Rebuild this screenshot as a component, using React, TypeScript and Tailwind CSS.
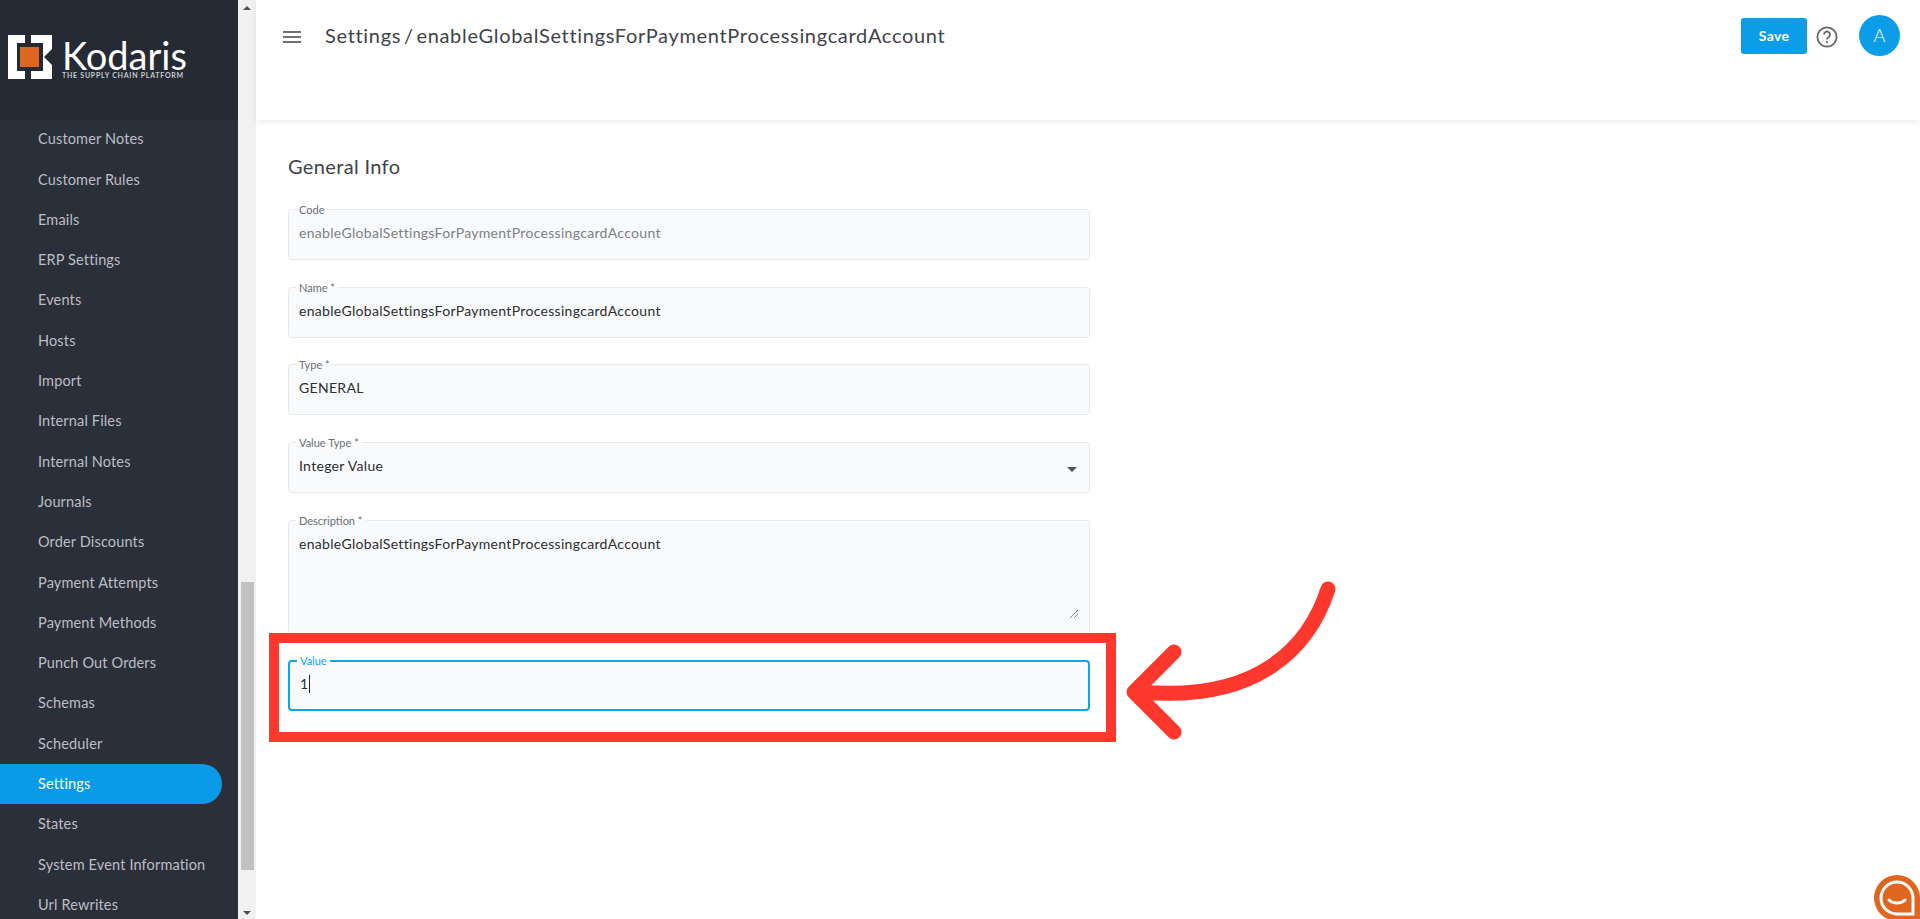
const navItems = [
  'Customer Notes',
  'Customer Rules',
  'Emails',
  'ERP Settings',
  'Events',
  'Hosts',
  'Import',
  'Internal Files',
  'Internal Notes',
  'Journals',
  'Order Discounts',
  'Payment Attempts',
  'Payment Methods',
  'Punch Out Orders',
  'Schemas',
  'Scheduler',
  'Settings',
  'States',
  'System Event Information',
  'Url Rewrites',
];

const settingCode = 'enableGlobalSettingsForPaymentProcessingcardAccount';

function Logo() {
  return (
    <div className="flex items-center pl-2 pt-[35px]">
      <svg width="44" height="44" viewBox="0 0 44 44" className="shrink-0">
        <path d="M0 0H17V8H9V36H17V44H0Z" fill="#fff" />
        <path d="M23 0H44V14L36 22H35V8H23Z" fill="#fff" />
        <path d="M23 44H44V30L36 22H35V36H23Z" fill="#fff" />
        <rect x="12" y="12" width="19" height="20" fill="#e0651f" />
      </svg>
      <div className="ml-[10px] mt-[4px] flex flex-col font-['Lato',sans-serif] text-white">
        <span className="text-[38px] leading-[30px]">Kodaris</span>
        <span className="mt-[2px] text-[7px] font-bold leading-[7px] tracking-[0.75px] text-[#c9cbce]">THE SUPPLY CHAIN PLATFORM</span>
      </div>
    </div>
  );
}

function Sidebar() {
  return (
    <aside className="flex h-full w-[238px] shrink-0 flex-col bg-[#2b2f3a]">
      <div className="h-[120px] shrink-0 bg-[#252a35]">
        <Logo />
      </div>
      <nav className="-mt-[1px] flex-1 overflow-hidden">
        {navItems.map((item) => (
          <div
            key={item}
            className={`flex h-[40.3px] w-[222px] items-center rounded-r-full pl-[38px] text-[14.5px] tracking-[0.15px] ${
              item === 'Settings' ? 'bg-[#0a9be8] text-white' : 'text-[#bcbec3]'
            }`}
          >
            {item}
          </div>
        ))}
      </nav>
    </aside>
  );
}

function FakeScrollbar() {
  return (
    <div className="flex h-full w-[18px] shrink-0 flex-col items-center bg-[#f1f1f1]">
      <div className="mt-[6px] h-0 w-0 border-x-[4px] border-b-[4px] border-x-transparent border-b-[#505050]" />
      <div className="mt-[572px] h-[288px] w-[13px] bg-[#c1c1c1]" />
      <div className="mt-[41px] h-0 w-0 border-x-[4px] border-t-[4px] border-x-transparent border-t-[#505050]" />
    </div>
  );
}

function Field({
  label,
  value,
  height = 'h-[53px]',
  muted,
  focused,
  children,
}: {
  label: string;
  value: string;
  height?: string;
  muted?: boolean;
  focused?: boolean;
  children?: React.ReactNode;
}) {
  return (
    <fieldset
      className={`relative w-[802px] rounded-[4px] bg-[#f9fafb] px-[10px] ${height} ${
        focused ? 'border-2 border-[#0ea5e9]' : 'border border-[#e8e9eb]'
      }`}
    >
      <legend className={`ml-[-3px] px-[3px] text-[11px] leading-[5px] ${focused ? 'text-[#0ea5e9]' : 'text-[#6b6f76]'}`}>
        {label}
      </legend>
      <div className={`mt-[11px] flex items-center text-[14px] leading-[20px] tracking-[0.31px] ${muted ? 'text-[#7c7f85]' : 'text-[#2b2d31]'}`}>
        {value}
        {focused && <span className="ml-[1px] h-[18px] w-[1px] bg-[#222]" />}
      </div>
      {children}
    </fieldset>
  );
}

function Header() {
  return (
    <header className="flex h-[120px] shrink-0 items-start bg-white pl-[24px] pr-[20px] shadow-[0_2px_6px_rgba(0,0,0,0.08)]">
      <svg width="24" height="24" viewBox="0 0 24 24" className="mt-[25px]" fill="#707070">
        <path d="M3 18h18v-2H3v2zm0-5h18v-2H3v2zm0-7v2h18V6H3z" />
      </svg>
      <h1 className="ml-[21px] mt-[21px] text-[20px] leading-[28px] tracking-[0.68px] [word-spacing:-3px] text-[#414349]">Settings / {settingCode}</h1>
      <div className="ml-auto flex items-center pt-[15px]">
        <button className="flex h-[36px] w-[66px] items-center justify-center rounded-[3px] bg-[#0b9de8] text-[14px] font-bold tracking-[0.3px] text-white">
          Save
        </button>
        <svg width="24" height="24" viewBox="0 0 24 24" fill="none" className="ml-[8px] mt-[3px]">
          <circle cx="12" cy="12" r="9.6" stroke="#666" strokeWidth="1.8" />
          <path d="M9 9.6a3 3 0 1 1 4.6 2.5c-1 .7-1.6 1.2-1.6 2.4" stroke="#666" strokeWidth="1.8" fill="none" />
          <circle cx="12" cy="17" r="1.1" fill="#666" />
        </svg>
        <div className="ml-[20px] flex h-[41px] w-[41px] items-center justify-center rounded-full bg-[#0b9de8] text-[18px] font-light text-white">A</div>
      </div>
    </header>
  );
}

function Annotation() {
  return (
    <>
      <div className="absolute left-[269px] top-[633px] h-[109px] w-[847px] border-[10px] border-[#fe382c]" />
      <svg className="absolute left-[1120px] top-[575px]" width="220" height="175" viewBox="0 0 220 175" fill="none">
        <path
          d="M208 14C190 70 140 128 20 117"
          stroke="#fe382c"
          strokeWidth="15"
          strokeLinecap="round"
        />
        <path
          d="M54 77L14 117L54 157"
          stroke="#fe382c"
          strokeWidth="15"
          strokeLinecap="round"
          strokeLinejoin="round"
        />
      </svg>
    </>
  );
}

function ChatWidget() {
  return (
    <svg className="absolute bottom-0 right-0" width="48" height="46" viewBox="0 0 48 46" fill="none">
      <path d="M25 2a23 23 0 1 0 0 46h23V25A23 23 0 0 0 25 2Z" fill="#e0651f" />
      <path d="M25 9a16 16 0 1 0 0 32h16V25A16 16 0 0 0 25 9Z" stroke="#fff" strokeWidth="3" fill="none" />
      <path d="M17 27c4 4 12 4 16 0" stroke="#fff" strokeWidth="3" strokeLinecap="round" fill="none" />
    </svg>
  );
}

export default function App() {
  return (
    <div className="relative flex h-[919px] w-[1920px] overflow-hidden bg-white font-['Lato',sans-serif]">
      <Sidebar />
      <FakeScrollbar />
      <main className="flex min-w-0 flex-1 flex-col">
        <Header />
        <div className="flex flex-col pl-[32px] pt-[32px]">
          <h2 className="text-[20px] leading-[28px] tracking-[0.35px] text-[#414349]">General Info</h2>
          <div className="mt-[27px] flex flex-col gap-[24.7px]">
            <Field label="Code" value={settingCode} muted />
            <Field label="Name *" value={settingCode} />
            <Field label="Type *" value="GENERAL" />
            <Field label="Value Type *" value="Integer Value">
              <span className="absolute right-[12px] top-[22px] h-0 w-0 border-x-[5px] border-t-[5px] border-x-transparent border-t-[#555]" />
            </Field>
            <Field label="Description *" value={settingCode} height="h-[116px]">
              <svg className="absolute right-[10px] top-[86px]" width="10" height="10" viewBox="0 0 10 10" fill="none">
                <path d="M1 9L9 1M5 9L9 5" stroke="#888" strokeWidth="1" />
              </svg>
            </Field>
            <Field label="Value" value="1" focused />
          </div>
        </div>
      </main>
      <Annotation />
      <ChatWidget />
    </div>
  );
}
